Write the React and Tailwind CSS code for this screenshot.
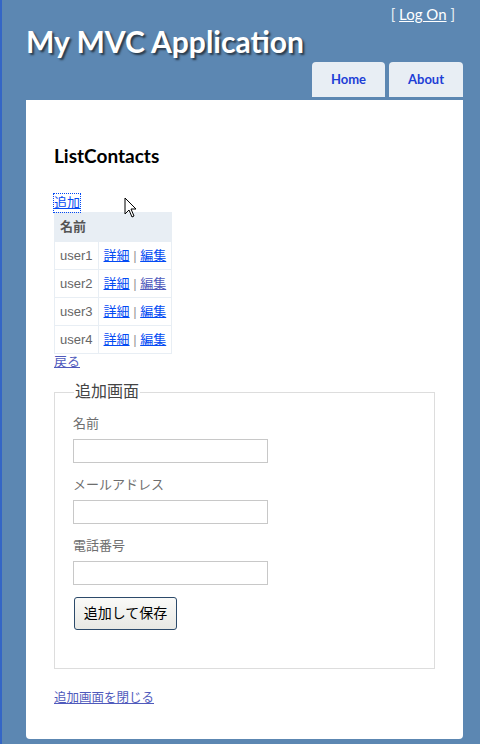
import * as React from "react";

const jp = { fontFamily: '"Liberation Sans", "Noto Sans CJK JP", sans-serif' };
const head = { fontFamily: 'Lato, "DejaVu Sans", sans-serif' };

const contacts = [
  { name: "user1", visited: false },
  { name: "user2", visited: true },
  { name: "user3", visited: false },
  { name: "user4", visited: false },
];

function Cursor() {
  return (
    <svg className="absolute left-[122px] top-[197px]" width="14" height="22" viewBox="0 0 14 22">
      <path d="M1 1 L1 17 L5 13 L8 20 L10 19 L7 12 L12 12 Z" fill="#fff" stroke="#000" strokeWidth="1" strokeLinejoin="miter" />
    </svg>
  );
}

function Field({ label }) {
  return (
    <div className="flex flex-col">
      <label className="text-[13px] leading-[20px] text-[#6e6e6e]">{label}</label>
      <input type="text" className="mt-[5px] h-[24px] w-[195px] border border-[#c8c8c8] bg-white" />
    </div>
  );
}

export default function App() {
  return (
    <div className="relative h-[744px] w-[480px] overflow-hidden border-l-2 border-[#3466c6] bg-[#5c87b2]" style={jp}>
      <div className="ml-[24px] w-[437px]">
        <div className="flex justify-end pr-[8px] pt-[5px] text-[15px] leading-[18px] text-[#e8eef4]" style={head}>
          <span>[ <a className="text-white underline">Log On</a> ]</span>
        </div>
        <h1
          className="-mt-[2px] text-[30px] font-bold leading-[40px] text-white [text-shadow:2px_2px_2px_#2a3a4a]"
          style={head}
        >
          My MVC Application
        </h1>
        <div className="flex justify-end gap-[4px] pt-[1px]" style={head}>
          <div className="flex h-[35px] w-[73px] items-center justify-center rounded-t-[4px] bg-[#e8eef4] text-[13px] font-bold text-[#1d3ed6]">
            Home
          </div>
          <div className="flex h-[35px] w-[74px] items-center justify-center rounded-t-[4px] bg-[#e8eef4] text-[13px] font-bold text-[#1d3ed6]">
            About
          </div>
        </div>
        <div className="mt-[3px] h-[639px] rounded-b-[4px] bg-white pl-[28px] pt-[44px]">
          <h2 className="text-[19px] font-bold leading-[24px] text-black" style={head}>
            ListContacts
          </h2>
          <div className="mt-[26px] text-[13px] leading-[18px]">
            <a className="inline-block text-[#034af3] underline outline outline-1 outline-dotted outline-[#034af3]">追加</a>
          </div>
          <table className="border-collapse text-[13px]">
            <thead>
              <tr>
                <th colSpan={2} className="h-[29px] border border-[#e8eef4] bg-[#e8eef4] px-[5px] text-left font-bold text-[#555]">
                  名前
                </th>
              </tr>
            </thead>
            <tbody>
              {contacts.map((c) => (
                <tr key={c.name}>
                  <td className="h-[28px] w-[42px] border border-[#e8eef4] px-[5px] text-[#666]">{c.name}</td>
                  <td className="border border-[#e8eef4] px-[5px] text-[#999]">
                    <a className="text-[#034af3] underline">詳細</a> |{" "}
                    <a className={c.visited ? "text-[#505abc] underline" : "text-[#034af3] underline"}>編集</a>
                  </td>
                </tr>
              ))}
            </tbody>
          </table>
          <div className="text-[13px] leading-[16px]">
            <a className="text-[#505abc] underline">戻る</a>
          </div>
          <fieldset className="mt-[12px] w-[381px] border border-[#ddd] pb-[38px] pl-[18px]">
            <legend className="ml-[1px] px-[1px] text-[16px] leading-[20px] text-[#444]">追加画面</legend>
            <div className="mt-[12px] flex flex-col gap-[12px]">
              <Field label="名前" />
              <Field label="メールアドレス" />
              <Field label="電話番号" />
            </div>
            <button className="mt-[12px] ml-[1px] h-[33px] w-[103px] rounded-[3px] border border-[#2c4a6a] bg-gradient-to-b from-[#fafaf8] to-[#e8e8e4] text-[14px] text-black">
              追加して保存
            </button>
          </fieldset>
          <div className="mt-[20px] text-[12.5px] leading-[18px]">
            <a className="text-[#505abc] underline">追加画面を閉じる</a>
          </div>
        </div>
      </div>
      <Cursor />
    </div>
  );
}
